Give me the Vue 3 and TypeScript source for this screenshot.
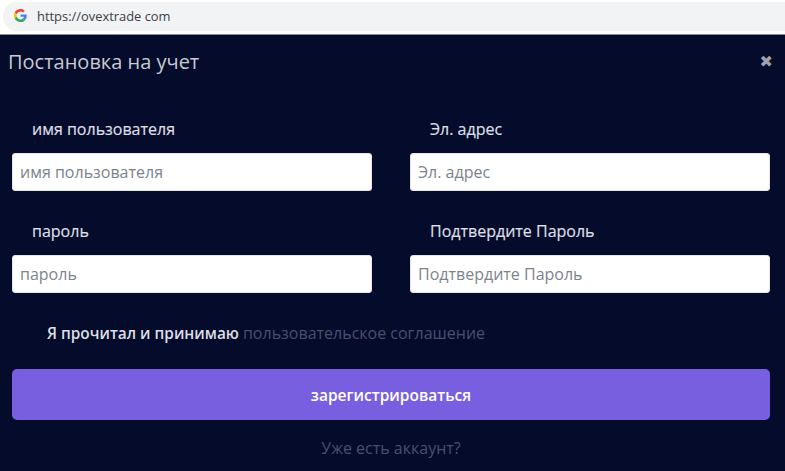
<template>
  <div class="page">
    <div class="browser-bar">
      <div class="omnibox">
        <svg class="g-logo" viewBox="0 0 48 48" width="13" height="13">
          <path fill="#EA4335" d="M24 9.500c3.500 0 6.700 1.300 9.100 3.500l6.800-6.800C35.800 2.400 30.300 0 24 0 14.600 0 6.500 5.400 2.600 13.200l7.900 6.100C12.400 13.700 17.700 9.500 24 9.500z"/>
          <path fill="#4285F4" d="M46.900 24.500c0-1.600-.1-3.100-.4-4.500H24v9h12.900c-.6 3-2.200 5.500-4.700 7.200l7.700 6c4.500-4.200 7-10.300 7-17.700z"/>
          <path fill="#FBBC05" d="M10.500 28.700c-.5-1.400-.8-3-.8-4.700s.3-3.200.8-4.700l-7.900-6.100C.9 16.500 0 20.100 0 24s.9 7.500 2.600 10.800l7.900-6.100z"/>
          <path fill="#34A853" d="M24 48c6.500 0 11.900-2.100 15.900-5.800l-7.700-6c-2.200 1.400-4.900 2.300-8.200 2.300-6.300 0-11.600-4.200-13.500-9.800l-7.900 6.100C6.500 42.600 14.600 48 24 48z"/>
        </svg>
        <span class="url">https://ovextrade com</span>
      </div>
    </div>
    <div class="modal">
      <header class="modal-head">
        <h1>Постановка на учет</h1>
        <span class="close">✖</span>
      </header>
      <form class="form" @submit.prevent>
        <div class="grid">
          <div v-for="f in fields" :key="f.label" class="field">
            <label>{{ f.label }}</label>
            <input :type="f.type" :placeholder="f.label" />
          </div>
        </div>
        <p class="agree">Я прочитал и принимаю <a>пользовательское соглашение</a></p>
        <button type="submit">зарегистрироваться</button>
        <a class="login">Уже есть аккаунт?</a>
      </form>
    </div>
  </div>
</template>

<script setup lang="ts">
interface Field {
  label: string
  type: string
}

const fields: Field[] = [
  { label: "имя пользователя", type: "text" },
  { label: "Эл. адрес", type: "email" },
  { label: "пароль", type: "password" },
  { label: "Подтвердите Пароль", type: "password" },
]
</script>

<style>
html, body {
  margin: 0;
  background: #050b2a;
}
</style>

<style scoped>
.page {
  width: 785px;
  height: 471px;
  overflow: hidden;
  display: flex;
  flex-direction: column;
  font-family: "Open Sans", "Noto Sans", sans-serif;
}
.browser-bar {
  height: 35px;
  box-sizing: border-box;
  background: #fff;
  padding: 2px 0 3px 3px;
  display: flex;
  flex-shrink: 0;
  border-bottom: 1px solid #8a8c99;
}
.omnibox {
  flex: 1;
  display: flex;
  align-items: center;
  gap: 10px;
  padding: 0 0 2px 11px;
  background: #f1f3f4;
  border-radius: 14px 0 0 14px;
}
.url {
  font-size: 12.9px;
  color: #3c4043;
}
.modal {
  flex: 1;
  background: #050b2a;
  padding: 0 15px 0 12px;
}
.modal-head {
  display: flex;
  justify-content: space-between;
  align-items: center;
  height: 54px;
  margin-left: -4px;
}
.modal-head h1 {
  margin: -1px 0 0;
  font-size: 20px;
  font-weight: 400;
  color: #c6cad3;
}
.close {
  color: #9ea3ae;
  font-size: 16px;
  font-family: "DejaVu Sans", sans-serif;
  margin: -2px -3px 0 0;
}
.grid {
  display: grid;
  grid-template-columns: 360px 360px;
  column-gap: 38px;
  row-gap: 29px;
  padding-top: 29px;
}
.field label {
  display: block;
  margin-left: 20px;
  font-size: 16px;
  font-weight: 400;
  line-height: 22px;
  color: #dcdfe5;
  -webkit-text-stroke: 0.2px #dcdfe5;
  margin-bottom: 13px;
}
.field input {
  display: block;
  width: 100%;
  height: 38px;
  box-sizing: border-box;
  border: 1px solid #e4e6ea;
  border-radius: 3px;
  background: #fff;
  padding: 0 7px;
  font-family: inherit;
  font-size: 16px;
}
.field input::placeholder {
  color: #7d838b;
  opacity: 1;
}
.agree {
  margin: 29px 0 0 35px;
  font-size: 15.4px;
  line-height: 22px;
  font-weight: 600;
  color: #dcdfe5;
}
.agree a {
  font-size: 16px;
  font-weight: 400;
  color: #4a4f72;
}
button {
  display: block;
  width: 758px;
  height: 51px;
  margin-top: 24px;
  border: none;
  border-radius: 5px;
  background: #775fe0;
  color: #fff;
  font-family: inherit;
  font-size: 15.5px;
  font-weight: 600;
}
.login {
  display: block;
  width: 758px;
  margin-top: 16px;
  text-align: center;
  font-size: 16px;
  line-height: 24px;
  color: #4a4f72;
}
</style>
